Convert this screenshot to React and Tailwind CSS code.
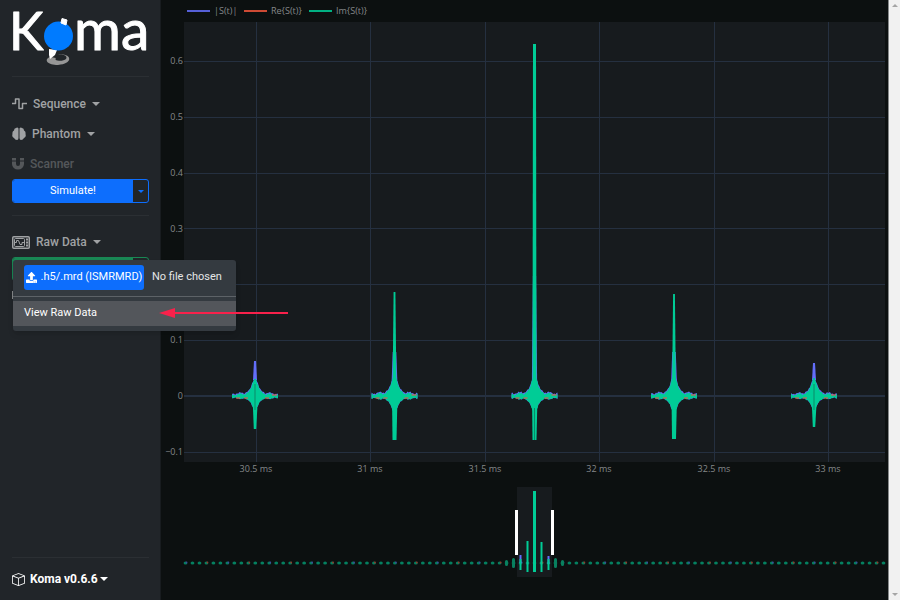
import React from "react";
import { BsBox } from "react-icons/bs";
import { FaUpload } from "react-icons/fa";

const PURPLE = "#636efa";
const RED = "#ef553b";
const GREEN = "#00cc96";

/* Echo bursts: centre x, heights of green and violet peaks, depth of the trough */
const ECHOES = [
  { x: 94, up: 17, mag: 35, magWidth: 1, down: 33, notch: true },
  { x: 233.5, up: 104, mag: 44, magWidth: 1.8, down: 44 },
  { x: 373.5, up: 352, mag: 120, magWidth: 1.6, down: 44, wide: true },
  { x: 513, up: 102, mag: 44, magWidth: 1.8, down: 43 },
  { x: 653, up: 18, mag: 33, magWidth: 1, down: 31, notch: true },
];

const ENVELOPE = [22, 20, 17, 14, 10, 8, 6, 5, 4, 3, 2, 2, 2, 3, 3, 3, 3, 2, 2, 1, 1, 1, 2, 2];
const ZERO = 396;

function envelopePath(cx, gain, lift, phase) {
  const top = [];
  const bottom = [];
  for (let d = -23; d <= 23; d += 1) {
    const base = ENVELOPE[Math.abs(d)] * gain;
    const wobble = ((d * 7 + phase * 5 + 200) % 3) - 1;
    top.push(`${cx + d},${ZERO - base - lift - wobble * 0.5}`);
    bottom.unshift(`${cx + d},${ZERO + base * 0.75 + 1 + wobble * 0.5}`);
  }
  return `M${top.join("L")}L${bottom.join("L")}Z`;
}

function Echo({ x, up, mag, magWidth, down, wide, notch, phase }) {
  const gain = notch ? 0.8 : 1;
  const tip = wide ? 1.5 : 0.9;
  return (
    <g>
      <path d={envelopePath(x, gain, 1, phase)} fill={PURPLE} />
      <path d={`M${x - magWidth - 1} ${ZERO - 16}L${x - magWidth} ${ZERO - mag}H${x + magWidth}L${x + magWidth + 1} ${ZERO - 16}Z`} fill={PURPLE} />
      <path d={envelopePath(x, gain, 0, phase + 1)} fill={GREEN} />
      <path d={`M${x - 19} 398h4m4 0h4m17 0h4m3-3h5`} stroke={RED} strokeWidth="1" />
      <path d={`M${x - 2} ${ZERO}L${x - tip} ${ZERO - up}h${tip * 2}L${x + 2} ${ZERO}Z`} fill={GREEN} />
      <path d={`M${x - 2.5} ${ZERO}L${x - (notch ? 1.2 : 2)} ${ZERO + down}h${notch ? 2.4 : 4}L${x + 3} ${ZERO}Z`} fill={GREEN} />
      {notch && <path d={`M${x} 384v26`} stroke="#0a8a69" strokeWidth="1" />}
      {wide && <path d={`M${x} 408v32`} stroke="#0a8a69" strokeWidth="1" />}
    </g>
  );
}

const X_TICKS = [
  [95, "30.5 ms"], [209, "31 ms"], [324, "31.5 ms"],
  [438, "32 ms"], [553, "32.5 ms"], [667, "33 ms"],
];
const Y_LINES = [61, 117, 173, 228, 284, 340, 396, 452];
/* The tick under the open menu carries no label */
const Y_TICKS = [
  [61, "0.6"], [117, "0.5"], [173, "0.4"], [229, "0.3"],
  [340, "0.1"], [396, "0"], [452, "−0.1"],
];
const LEGEND = [
  [26, "|S(t)|", PURPLE], [83, "Re{S(t)}", RED], [148, "Im{S(t)}", GREEN],
];

function SignalChart() {
  const dots = Array.from({ length: 101 }, (_, i) => 24.5 + i * 6.98);
  return (
    <svg viewBox="0 0 727 600" className="block w-full" role="img" aria-label="Raw signal">
      <rect x="23" y="22" width="701" height="440" fill="#171b1e" />
      <g stroke="#253040" strokeWidth="1">
        {X_TICKS.map(([x]) => <path key={x} d={`M${x + 0.5} 22V462`} />)}
        {Y_LINES.map((y) => <path key={y} d={`M23 ${y === 396 ? y : y + 0.5}H724`} strokeWidth={y === 396 ? 2 : 1} />)}
      </g>
      <g fill="#85888a" fontSize="9" fontFamily="'Open Sans', sans-serif">
        {X_TICKS.map(([x, t]) => <text key={t} x={x} y="472" textAnchor="middle">{t}</text>)}
        {Y_TICKS.map(([y, t]) => <text key={t} x="22" y={y + 3} textAnchor="end">{t}</text>)}
        {LEGEND.map(([x, t, c]) => (
          <g key={t}>
            <path d={`M${x} 11h23`} stroke={c} strokeWidth="2" opacity="0.85" />
            <text x={x + 27} y="14">{t}</text>
          </g>
        ))}
      </g>
      {ECHOES.map((e, i) => <Echo key={e.x} {...e} phase={i} />)}

      <rect x="356" y="487" width="35" height="90" fill="#171b1e" />
      {dots.map((x, i) => (
        <g key={x} opacity="0.6">
          <ellipse cx={x} cy="563" rx="1.9" ry="1.6" fill={GREEN} />
          {i % 3 === 0 && <circle cx={x + 1} cy="562.5" r="0.9" fill={i % 2 ? RED : PURPLE} />}
        </g>
      ))}
      <g stroke="#08805f" strokeWidth="3" strokeLinecap="round">
        <path d="M352.500 559.500v7M345.500 561.500v3M394.500 559.500v7M401.500 561.500v3" />
      </g>
      <g stroke={PURPLE} strokeWidth="2">
        <path d="M359.500 555v8M387.500 556v8" />
      </g>
      <g stroke={GREEN} strokeWidth="2" fill="none">
        <path d="M359.500 559v11M387.500 559v11M366.500 541v31M380.500 542v30" />
        <path d="M373.500 491v81" strokeWidth="3" />
      </g>
      <path d="M355.500 510v45M391.500 510v45" stroke="#fff" strokeWidth="3" />
    </svg>
  );
}

function Logo() {
  return (
    <svg viewBox="0 -8 137 76" className="block h-[76px] w-full overflow-visible" role="img" aria-label="Koma">
      <g fill="#fff" stroke="#fff" strokeLinejoin="round" fontFamily="Lato, sans-serif">
        <text x="-3" y="42" fontSize="52">K</text>
        <text x="62" y="42" fontSize="57">ma</text>
      </g>
      <path d="M38 49C31 52 36 57 46 57C62 56 60 45 46 46.500C52 46 56 48 54 51C51 54 41 53 44 50Z" fill="#969696" />
      <path d="M37 41l8 1-2 5-5 4-1-4Z" fill="#fff" />
      <circle cx="46.500" cy="28" r="14.500" fill="#007bff" />
      <path d="M50 10.500l5 1.500-1 5-5-2Z" fill="#fff" stroke="#fff" strokeLinejoin="round" />
    </svg>
  );
}

const PulseIcon = () => (
  <svg viewBox="0 0 15 14" className="h-[14px] w-[15px]" fill="none" stroke="currentColor" strokeWidth="1.5">
    <path d="M0 6.500h3.500V2h3.500v9.500h3.500V6.500H15" strokeLinejoin="round" />
  </svg>
);

const BrainIcon = () => (
  <svg viewBox="0 0 14 14" className="h-[14px] w-[14px]" fill="currentColor">
    <path d="M6.500 1.500Q5.500 0 4 1Q2 1 2 3.500Q0 4.500 .5 7Q-.5 10 2 11Q3 13 5 13Q6.500 13 6.500 11Z" />
    <path d="M7.500 1.500Q8.500 0 10 1Q12 1 12 3.500Q14 4.500 13.500 7Q14.500 10 12 11Q11 13 9 13Q7.500 13 7.500 11Z" />
  </svg>
);

const MagnetIcon = () => (
  <svg viewBox="0 0 12 12" className="h-[12px] w-[12px]" fill="currentColor">
    <path d="M0 0h4v2.500H0ZM8 0h4v2.500H8Z" />
    <path d="M0 3.500h4V6a2 2 0 0 0 4 0V3.500h4V6A6 5.500 0 0 1 0 6Z" />
  </svg>
);

const ScopeIcon = () => (
  <svg viewBox="0 0 18 13" className="h-[13px] w-[18px]" fill="none" stroke="currentColor">
    <rect x=".75" y=".75" width="16.500" height="11.500" rx="1" strokeWidth="1.500" />
    <rect x="2.500" y="2.500" width="10" height="8" rx="1" />
    <path d="M2.500 6.500h2V4.500h2L8 8.500h2v-2h2.500" />
    <path d="M15 2.500v2M15 5.500v2M15 8.500v2" strokeWidth="2" />
  </svg>
);

const Caret = () => (
  <span aria-hidden="true" className="border-x-4 border-t-4 border-x-transparent border-t-current" />
);

function NavItem({ icon, label, caret, className = "" }) {
  return (
    <button type="button" className={`flex h-[30px] items-center text-[12px] font-medium text-[#a0a2a4] ${className}`}>
      {icon}
      <span className="mx-[6px]">{label}</span>
      {caret && <Caret />}
    </button>
  );
}

function RawDataMenu() {
  return (
    <div className="absolute left-px top-[3px] z-10 w-[223px] rounded-[3px] bg-[#343a40] pt-[5px] pb-[5px] text-[11px] text-[#e4e5e6] shadow-md">
      <div className="flex items-center gap-2 pl-[11px]">
        <label htmlFor="raw-file" className="flex h-[25px] w-[120px] items-center justify-center gap-1 whitespace-nowrap rounded-[3px] bg-[#0d6efd] text-white">
          <FaUpload className="h-[11px] w-[11px]" />
          .h5/.mrd (ISMRMRD)
        </label>
        <input id="raw-file" type="file" className="sr-only" />
        <span>No file chosen</span>
      </div>
      <hr className="mt-[6px] mb-1 border-[#5d6267]" />
      <button type="button" className="flex h-[25px] w-full items-center bg-[#53565b] pl-[11px] text-left text-white">
        View Raw Data
      </button>
      <svg viewBox="0 0 130 12" className="absolute left-[146px] top-[47px] h-[12px] w-[130px]" aria-hidden="true">
        <path d="M14 6H129" stroke="#f8214b" strokeWidth="2" />
        <path d="M0 6L16 1V11Z" fill="#f8214b" />
      </svg>
    </div>
  );
}

function Sidebar() {
  return (
    <aside className="relative z-10 flex w-[161px] shrink-0 flex-col border-r border-[#181c1f] bg-[#212529] pl-3 pr-[11px]">
      <Logo />
      <hr className="mb-3 border-[#2b2f33]" />
      <nav className="flex flex-col items-start">
        <NavItem icon={<PulseIcon />} label="Sequence" caret />
        <NavItem icon={<BrainIcon />} label="Phantom" caret />
        <NavItem icon={<MagnetIcon />} label="Scanner" className="opacity-40" />
      </nav>
      <div className="flex h-[24px] w-full overflow-hidden rounded-[3px] border border-[#0d6efd] text-[11px]">
        <button type="button" className="flex-1 bg-[#0d6efd] text-white">Simulate!</button>
        <button type="button" aria-label="Simulation options" className="flex w-[15px] items-center justify-center text-[#0d6efd]">
          <span aria-hidden="true" className="border-x-3 border-t-3 border-x-transparent border-t-current" />
        </button>
      </div>
      <hr className="mt-3 mb-[11px] border-[#2b2f33]" />
      <NavItem icon={<ScopeIcon />} label="Raw Data" caret />
      <div className="relative">
        <div className="flex h-[24px] overflow-hidden rounded-[3px] border border-[#198754]">
          <button type="button" aria-label="Reconstruct" className="flex-1 bg-[#198754]" />
          <button type="button" aria-label="Reconstruction options" className="w-[15px]" />
        </div>
        <svg viewBox="0 0 14 8" className="mt-[10px] h-[8px] w-[14px]" aria-hidden="true">
          <rect width="14" height="8" fill="#85888a" />
        </svg>
        <RawDataMenu />
      </div>
      <div className="mt-auto">
        <hr className="border-[#2b2f33]" />
        <button type="button" className="flex h-[42px] items-center gap-[5px] text-[12px] font-bold text-white">
          <BsBox className="h-[13px] w-[13px]" />
          <span className="-mr-[3px]">Koma v0.6.6</span>
          <Caret />
        </button>
      </div>
    </aside>
  );
}

export default function App() {
  return (
    <div className="flex min-h-screen bg-[#0c1010] font-['Roboto','Noto_Sans',sans-serif]">
      <Sidebar />
      <main className="min-w-0 flex-1">
        <SignalChart />
      </main>
      <div aria-hidden="true" className="flex w-[12px] shrink-0 flex-col items-center justify-between border-l border-[#86898a] bg-[#f1f1f1] py-[4px]">
        <span className="border-x-3 border-b-3 border-x-transparent border-b-[#a5a5a5]" />
        <span className="border-x-3 border-t-3 border-x-transparent border-t-[#a5a5a5]" />
      </div>
    </div>
  );
}
